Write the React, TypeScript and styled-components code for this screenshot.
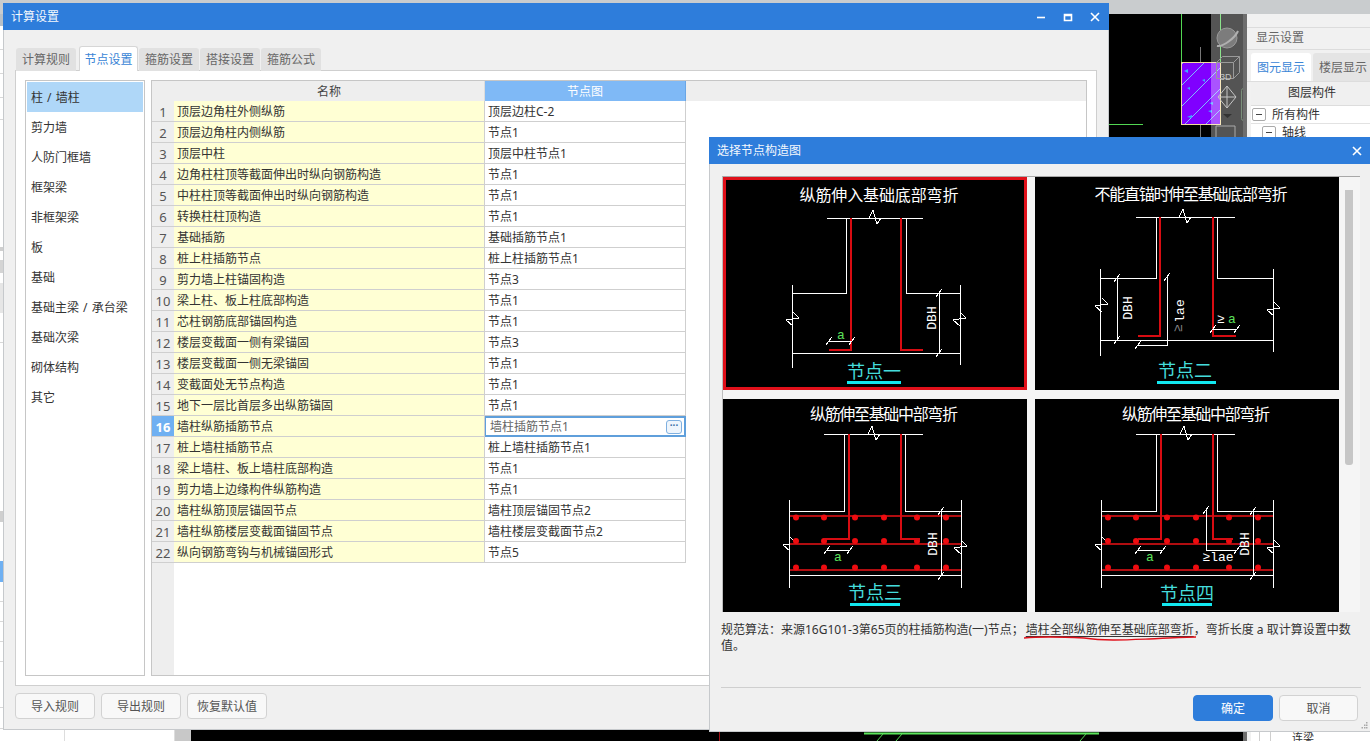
import React from "react";
import styled, { createGlobalStyle } from "styled-components";

const FONT = `"Noto Sans", "Noto Sans CJK SC", sans-serif`;

const Global = createGlobalStyle`
  html, body { margin: 0; padding: 0; background: #f3f3f3; overflow: hidden; }
  * { box-sizing: border-box; }
`;

const Desktop = styled.div`
  position: relative;
  width: 1370px;
  height: 741px;
  overflow: hidden;
  font: 12px/16px ${FONT};
  color: #333;
`;

/* ---------- application behind the dialogs ---------- */
const Backdrop = styled.div`
  width: 100%;
  height: 100%;
  display: flex;
  flex-direction: column;
`;
const TopStrip = styled.div`
  height: 14px;
  flex: none;
  background: #c9ccce;
`;
const BackRow = styled.div`
  flex: 1;
  min-height: 0;
  display: flex;
`;
const LeftRail = styled.div`
  width: 175px;
  flex: none;
  background: #fff;
  display: flex;
  flex-direction: column;
  border-right: 1px solid #ddd;
  position: relative;
`;
const RailRow = styled.div<{ $h: number; $tone?: string; $line?: boolean }>`
  height: ${(p) => p.$h}px;
  flex: none;
  background: ${(p) => p.$tone ?? "transparent"};
  border-bottom: ${(p) => (p.$line ? "1px solid #d8d8d8" : "none")};
`;
const RailFoot = styled.div`
  flex: 1;
  margin-left: 64px;
  border-left: 1px solid #ddd;
`;
const Gutter = styled.div`
  width: 16px;
  flex: none;
  background: #c8c8c8;
`;
const Cad = styled.svg`
  width: 1052px;
  flex: none;
  height: 727px;
  background: #000;
  display: block;
`;
const CadGap = styled.div`
  width: 4px;
  flex: none;
  background: #6e6e6e;
`;
const SidePanel = styled.div`
  flex: 1;
  background: #f1f1f1;
  display: flex;
  flex-direction: column;
  padding-top: 13px;
`;
const SideTitle = styled.div`
  height: 23px;
  line-height: 19px;
  padding-left: 9px;
  color: #666;
  font-size: 12px;
  border-top: 1px solid #dcdcdc;
  border-bottom: 1px solid #dcdcdc;
`;
const SideTabs = styled.div`
  display: flex;
  gap: 2px;
  padding: 3px 0 0 4px;
  height: 32px;
  border-bottom: 1px solid #ddd;
  white-space: nowrap;
`;
const SideTab = styled.div<{ $active?: boolean }>`
  width: 60px;
  flex: none;
  height: 28px;
  text-align: center;
  line-height: 29px;
  border-radius: 3px 3px 0 0;
  background: ${(p) => (p.$active ? "#fff" : "#e4e4e4")};
  color: ${(p) => (p.$active ? "#3a85d6" : "#666")};
`;
const SideHead = styled.div`
  height: 24px;
  line-height: 22px;
  text-align: center;
  margin-left: 4px;
  background: #f0f0f0;
  border-bottom: 1px solid #ddd;
`;
const TreeBody = styled.div`
  flex: 1;
  background: #fff;
  margin-left: 4px;
  position: relative;
`;
const TreeRow = styled.div<{ $indent: number }>`
  display: flex;
  align-items: center;
  gap: 6px;
  height: 18px;
  padding-left: ${(p) => p.$indent}px;
  border-bottom: 1px solid #e2e2e2;
`;
const TreeBox = styled.span`
  width: 14px;
  height: 13px;
  flex: none;
  border: 1px solid #aaa;
  border-radius: 2px;
  display: flex;
  align-items: center;
  justify-content: center;
  &::before {
    content: "";
    width: 6px;
    height: 1px;
    background: #444;
  }
`;
const TreeFoot = styled.div`
  position: absolute;
  left: 41px;
  top: 625px;
  line-height: 14px;
  font-size: 11px;
`;
const TreeGuides = styled.div`
  position: absolute;
  left: 8px;
  top: 624px;
  width: 12px;
  height: 14px;
  border-left: 1px solid #cfcfcf;
  border-right: 1px solid #cfcfcf;
`;

/* ---------- dialogs ---------- */
const Dialog = styled.section<{ $x: number; $y: number; $w: number; $h: number }>`
  position: absolute;
  left: ${(p) => p.$x}px;
  top: ${(p) => p.$y}px;
  width: ${(p) => p.$w}px;
  height: ${(p) => p.$h}px;
  background: #f0f0f0;
  border: 1px solid #c6c9cc;
  border-top: none;
  display: flex;
  flex-direction: column;
`;
const TitleBar = styled.header`
  height: 27px;
  flex: none;
  margin: 0 -1px;
  background: #2e7ddb;
  color: #f4f8fd;
  display: flex;
  align-items: center;
  padding: 0 9px 0 8px;
  font-size: 12px;
`;
const TitleText = styled.span`
  flex: 1;
`;
const WinButton = styled.svg`
  width: 10px;
  height: 10px;
  margin-left: 17px;
  flex: none;
  fill: none;
  stroke: #fff;
  stroke-width: 1.6;
`;

const MainBody = styled.div`
  flex: 1;
  min-height: 0;
  padding: 16px 11px 0 11px;
  display: flex;
  flex-direction: column;
`;
const Tabs = styled.div`
  display: flex;
  align-items: flex-end;
  height: 25px;
  flex: none;
  gap: 1px;
  padding-left: 1px;
  position: relative;
  z-index: 1;
  margin-bottom: -1px;
`;
const Tab = styled.div<{ $active?: boolean }>`
  width: ${(p) => (p.$active ? 59 : 60)}px;
  margin-left: ${(p) => (p.$active ? 2 : 0)}px;
  height: ${(p) => (p.$active ? 25 : 23)}px;
  text-align: center;
  line-height: ${(p) => (p.$active ? 26 : 24)}px;
  background: ${(p) => (p.$active ? "#fff" : "#e1e1e1")};
  color: ${(p) => (p.$active ? "#3a85d6" : "#666")};
  border: ${(p) => (p.$active ? "1px solid #d6d6d6" : "none")};
  border-bottom: none;
  border-radius: 3px 3px 0 0;
`;
const Pane = styled.div`
  height: 616px;
  flex: none;
  background: #fff;
  border: 1px solid #cfcfcf;
  padding: 9px;
  display: flex;
  gap: 6px;
`;
const CategoryList = styled.ul`
  width: 120px;
  flex: none;
  margin: 0;
  padding: 1px;
  list-style: none;
  border: 1px solid #c6c6c6;
`;
const Category = styled.li<{ $active?: boolean }>`
  height: 30px;
  line-height: 32px;
  padding-left: 4px;
  word-spacing: 1px;
  background: ${(p) => (p.$active ? "#afd7f8" : "transparent")};
`;
const Grid = styled.div`
  width: 936px;
  flex: none;
  border: 1px solid #c6c6c6;
  background: linear-gradient(to right, #eeeeee 22px, #fff 22px);
  display: flex;
  flex-direction: column;
`;
const HeadRow = styled.div`
  display: flex;
  height: 20px;
  flex: none;
  padding-left: 22px;
  background: #eeeeee;
`;
const HeadCell = styled.div<{ $w: number; $active?: boolean }>`
  width: ${(p) => p.$w}px;
  flex: none;
  text-align: center;
  line-height: 22px;
  color: ${(p) => (p.$active ? "#fff" : "#444")};
  background: ${(p) => (p.$active ? "#7fb9f6" : "transparent")};
  border-right: ${(p) => (p.$active ? "1px solid #69a6e6" : "1px solid #dcdcdc")};
`;
const Row = styled.div`
  display: flex;
  height: 21px;
  flex: none;
  line-height: 22px;
`;
const IndexCell = styled.div<{ $active?: boolean }>`
  width: 22px;
  flex: none;
  text-align: center;
  font-size: 13px;
  color: ${(p) => (p.$active ? "#fff" : "#555")};
  font-weight: ${(p) => (p.$active ? 700 : 400)};
  background: ${(p) => (p.$active ? "#6fb0f2" : "#eeeeee")};
  border-bottom: 1px solid #cfcfcf;
`;
const NameCell = styled.div`
  width: 311px;
  flex: none;
  padding-left: 3px;
  background: #ffffd4;
  border-bottom: 1px solid #cfcfcf;
  border-right: 1px solid #cfcfcf;
  white-space: nowrap;
`;
const ValueCell = styled.div`
  width: 201px;
  flex: none;
  padding-left: 3px;
  background: #fff;
  border-bottom: 1px solid #cfcfcf;
  border-right: 1px solid #cfcfcf;
  white-space: nowrap;
`;
const ActiveCell = styled.div`
  width: 201px;
  flex: none;
  padding: 0 2px 0 4px;
  background: #fff;
  border: 2px solid #5f9fdb;
  border-left-width: 1px;
  color: #666;
  display: flex;
  align-items: center;
  justify-content: space-between;
  line-height: 17px;
`;
const MoreButton = styled.span`
  width: 16px;
  height: 14px;
  flex: none;
  border: 1px solid #7fb0e0;
  border-radius: 3px;
  background: #eef5fc;
  color: #3a6ea5;
  font-size: 10px;
  line-height: 8px;
  text-align: center;
  font-weight: 700;
`;
const ButtonRow = styled.div`
  display: flex;
  gap: 6px;
  margin-top: 7px;
`;
const Btn = styled.button<{ $primary?: boolean; $w?: number }>`
  width: ${(p) => p.$w ?? 80}px;
  height: 26px;
  padding: 2px 0 0;
  border-radius: 4px;
  font: 12px/16px ${FONT};
  color: ${(p) => (p.$primary ? "#fff" : "#555")};
  background: ${(p) => (p.$primary ? "#2e7ddb" : "#f8f8f8")};
  border: 1px solid ${(p) => (p.$primary ? "#2e7ddb" : "#d2d2d2")};
`;

const PickBody = styled.div`
  flex: 1;
  min-height: 0;
  padding: 12px 10px 0 12px;
  display: flex;
  flex-direction: column;
`;
const Gallery = styled.div`
  height: 436px;
  flex: none;
  display: flex;
  background: #f5f5f5;
  border-top: 1px solid #a8a8a8;
  border-left: 1px solid #bdbdbd;
`;
const TileGrid = styled.div`
  display: grid;
  grid-template-columns: 304px 304px;
  grid-template-rows: 213px 213px;
  column-gap: 8px;
  row-gap: 9px;
  flex: none;
`;
const Tile = styled.svg<{ $selected?: boolean }>`
  display: block;
  width: 100%;
  height: 100%;
  background: #000;
  outline: ${(p) => (p.$selected ? "3px solid #e0101a" : "none")};
  outline-offset: -3px;
`;
const ScrollTrack = styled.div`
  flex: 1;
  padding: 13px 0 0 6px;
`;
const ScrollThumb = styled.div`
  width: 8px;
  height: 275px;
  background: #c6c6c6;
  border-radius: 0 0 3px 3px;
`;
const Note = styled.p`
  margin: 10px 0 0 -1px;
  height: 34px;
  width: 640px;
  line-height: 16px;
  color: #333;
`;
const Marked = styled.span`
  position: relative;
  margin-left: 2px;
  text-decoration: underline;
  text-underline-offset: 2px;
`;
const Scribble = styled.svg`
  position: absolute;
  left: -2px;
  bottom: -3px;
  width: 172px;
  height: 7px;
  fill: none;
  stroke: #e0101a;
  stroke-width: 1.4;
  overflow: visible;
`;
const Rule = styled.div`
  margin: 31px -1px 0 -1px;
  border-top: 1px solid #cfcfcf;
  flex: none;
`;
const PickFooter = styled.div`
  display: flex;
  justify-content: flex-end;
  gap: 6px;
  margin: 7px 2px 0 0;
`;
const Grip = styled.svg`
  position: absolute;
  right: 2px;
  bottom: 2px;
  width: 7px;
  height: 7px;
  fill: #a8a8a8;
`;

/* ---------- CAD drawing parts ---------- */
const Wh = styled.path`
  fill: none;
  stroke: #fff;
  stroke-width: 1;
  shape-rendering: crispEdges;
`;
const Rd = styled.path`
  fill: none;
  stroke: #d80c12;
  stroke-width: 2.5;
  shape-rendering: crispEdges;
`;
const Bar = styled.path`
  fill: none;
  stroke: #b00d10;
  stroke-width: 2;
  shape-rendering: crispEdges;
`;
const Dot = styled.circle`
  fill: #ee0c10;
`;
const Caption = styled.text`
  fill: #fff;
  font: 16px ${FONT};
  text-anchor: middle;
`;
const NodeName = styled.text`
  fill: #45dcdc;
  font: 18px ${FONT};
  text-anchor: middle;
`;
const NodeBar = styled.rect`
  fill: #12e8f0;
`;
const Mono = styled.text<{ $c?: string }>`
  fill: ${(p) => p.$c ?? "#fff"};
  font: 13px "Liberation Mono", monospace;
  text-anchor: middle;
`;

const zigTop = (x: number, y: number) =>
  `M${x - 6} ${y}L${x - 2} ${y - 8}L${x + 2} ${y + 6}L${x + 6} ${y}`;
const zigSide = (x: number, y: number) =>
  `M${x} ${y - 8}L${x + 6} ${y - 2}L${x - 7} ${y}L${x} ${y + 6}`;
const tick = (x: number, y: number) => `M${x - 3} ${y + 4}L${x + 3} ${y - 4}`;

const Label: React.FC<{ x: number; y: number; w: number; children: string }> = ({ x, y, w, children }) => (
  <Caption x={x} y={y} textLength={w} lengthAdjust="spacing">{children}</Caption>
);
const VText: React.FC<{ x: number; y: number; children: string; c?: string }> = ({ x, y, children, c }) => (
  <Mono x={x} y={y} $c={c} transform={`rotate(-90 ${x} ${y})`}>{children}</Mono>
);

const rebarRows = [517.5, 541, 567.5];

const Rebars: React.FC<{ from: number; to: number; xs: number[] }> = ({ from, to, xs }) => (
  <>
    <Bar d={`M${from} 516H${to}M${from} 544H${to}M${from} 570H${to}`} />
    {rebarRows.map((y) => xs.map((x) => <Dot key={`${x}-${y}`} cx={x} cy={y} r={3} />))}
  </>
);

const TileOne = () => (
  <Tile $selected viewBox="723 177 304 213">
    <Label x={879} y={201} w={159}>纵筋伸入基础底部弯折</Label>
    <Wh d={`M827 218.5H923M846.5 218.5V293.5H792.5M792.5 285V368M906.5 218.5V293.5H960.5M960.5 285V365M792.5 353.5H960.5`} />
    <Wh d={zigTop(875, 218) + zigSide(793, 320) + zigSide(960, 320)} />
    <Rd d="M851 218V350H829M901 218V350H923" />
    <Wh d={`M939.5 293V353${tick(939, 293)}${tick(939, 353)}M829 341.5H852${tick(829, 341)}${tick(852, 341)}`} />
    <VText x={936} y={318}>DBH</VText>
    <Mono x={841} y={339} $c="#5ce05c">a</Mono>
    <NodeName x={874} y={378}>节点一</NodeName>
    <NodeBar x={847} y={381} width={54} height={3} />
  </Tile>
);

const TileTwo = () => (
  <Tile viewBox="1035 177 304 213">
    <Label x={1191} y={200} w={193}>不能直锚时伸至基础底部弯折</Label>
    <Wh d="M1136 217.5H1235M1156.5 217.5V278.5H1100.5M1100.5 269V356M1217.5 217.5V278.5H1273.5M1273.5 269V352M1100.5 340.5H1273.5" />
    <Wh d={zigTop(1185, 217) + zigSide(1102, 306) + zigSide(1274, 310)} />
    <Rd d="M1160 217V336H1138M1213 217V336H1236" />
    <Wh d={`M1117.5 278V340${tick(1117, 278)}${tick(1117, 340)}M1167.5 277V345.5H1138${tick(1167, 277)}${tick(1138, 345)}M1213 329.5H1237${tick(1213, 329)}${tick(1237, 329)}`} />
    <VText x={1132} y={308}>DBH</VText>
    <VText x={1184} y={311}>lae</VText>
    <VText x={1182} y={328} c="#888">≥</VText>
    <Mono x={1221} y={323}>≥</Mono>
    <Mono x={1232} y={323} $c="#5ce05c">a</Mono>
    <NodeName x={1185} y={377}>节点二</NodeName>
    <NodeBar x={1157} y={381} width={59} height={3} />
  </Tile>
);

const TileThree = () => (
  <Tile viewBox="723 399 304 213">
    <Label x={884} y={420} w={148}>纵筋伸至基础中部弯折</Label>
    <Wh d="M824 434.5H923M844.5 434.5V511.5H789.5M789.5 500V588M905.5 434.5V511.5H961.5M961.5 500V588M789.5 575.5H961.5" />
    <Wh d={zigTop(874, 434) + zigSide(790, 545) + zigSide(961, 548)} />
    <Rebars from={790} to={961} xs={[796, 824, 855, 884, 917, 946]} />
    <Rd d="M849 434V539H824M901 434V539H920" />
    <Wh d={`M941 511V576${tick(941, 511)}${tick(941, 576)}M827 550.5H850${tick(827, 550)}${tick(850, 550)}`} />
    <VText x={937} y={544}>DBH</VText>
    <Mono x={838} y={561} $c="#5ce05c">a</Mono>
    <NodeName x={875} y={599}>节点三</NodeName>
    <NodeBar x={850} y={603} width={50} height={3} />
  </Tile>
);

const TileFour = () => (
  <Tile viewBox="1035 399 304 213">
    <Label x={1196} y={420} w={148}>纵筋伸至基础中部弯折</Label>
    <Wh d="M1136 434.5H1235M1156.5 434.5V511.5H1101.5M1101.5 500V588M1217.5 434.5V511.5H1273.5M1273.5 500V588M1101.5 575.5H1273.5" />
    <Wh d={zigTop(1186, 434) + zigSide(1102, 545) + zigSide(1274, 548)} />
    <Rebars from={1102} to={1273} xs={[1108, 1136, 1167, 1196, 1229, 1258]} />
    <Rd d="M1161 434V539H1138M1213 434V539H1233" />
    <Wh d={`M1253 511V576${tick(1253, 511)}${tick(1253, 576)}M1138 550.5H1163${tick(1138, 550)}${tick(1163, 550)}M1206.5 510V550.5H1237${tick(1206, 510)}${tick(1237, 550)}`} />
    <VText x={1249} y={544}>DBH</VText>
    <Mono x={1218} y={561}>≥lae</Mono>
    <Mono x={1150} y={561} $c="#5ce05c">a</Mono>
    <NodeName x={1187} y={600}>节点四</NodeName>
    <NodeBar x={1162} y={603} width={50} height={3} />
  </Tile>
);

/* ---------- data ---------- */
const tabs = ["计算规则", "节点设置", "箍筋设置", "搭接设置", "箍筋公式"];
const categories = ["柱 / 墙柱", "剪力墙", "人防门框墙", "框架梁", "非框架梁", "板", "基础", "基础主梁 / 承台梁", "基础次梁", "砌体结构", "其它"];
const rows: [string, string][] = [
  ["顶层边角柱外侧纵筋", "顶层边柱C-2"],
  ["顶层边角柱内侧纵筋", "节点1"],
  ["顶层中柱", "顶层中柱节点1"],
  ["边角柱柱顶等截面伸出时纵向钢筋构造", "节点1"],
  ["中柱柱顶等截面伸出时纵向钢筋构造", "节点1"],
  ["转换柱柱顶构造", "节点1"],
  ["基础插筋", "基础插筋节点1"],
  ["桩上柱插筋节点", "桩上柱插筋节点1"],
  ["剪力墙上柱锚固构造", "节点3"],
  ["梁上柱、板上柱底部构造", "节点1"],
  ["芯柱钢筋底部锚固构造", "节点1"],
  ["楼层变截面一侧有梁锚固", "节点3"],
  ["楼层变截面一侧无梁锚固", "节点1"],
  ["变截面处无节点构造", "节点1"],
  ["地下一层比首层多出纵筋锚固", "节点1"],
  ["墙柱纵筋插筋节点", "墙柱插筋节点1"],
  ["桩上墙柱插筋节点", "桩上墙柱插筋节点1"],
  ["梁上墙柱、板上墙柱底部构造", "节点1"],
  ["剪力墙上边缘构件纵筋构造", "节点1"],
  ["墙柱纵筋顶层锚固节点", "墙柱顶层锚固节点2"],
  ["墙柱纵筋楼层变截面锚固节点", "墙柱楼层变截面节点2"],
  ["纵向钢筋弯钩与机械锚固形式", "节点5"],
];
const railRows: { h: number; tone?: string; line?: boolean }[] = [
  { h: 12, tone: "#b8c0c8" },
  { h: 24, line: true },
  { h: 24, line: true },
  { h: 24, line: true },
  { h: 22, line: true },
  { h: 127 },
  { h: 4, tone: "#cfcfcf" },
  { h: 9 },
  { h: 13, tone: "#d4d4d4" },
  { h: 10 },
  { h: 30, tone: "#e6e6e6" },
  { h: 30, line: true },
  { h: 168 },
  { h: 11, tone: "#cfcfcf" },
  { h: 39 },
  { h: 21, tone: "#6fb0f2" },
  { h: 20, line: true },
  { h: 20, line: true },
  { h: 20, line: true },
  { h: 20, line: true },
  { h: 46, line: true },
  { h: 21, line: true },
];

const hatch = [0, 1, 2, 3, 4, 5];

export default function App() {
  return (
    <Desktop>
      <Global />
      <Backdrop>
        <TopStrip />
        <BackRow>
          <LeftRail>
            {railRows.map((r, i) => (
              <RailRow key={i} $h={r.h} $tone={r.tone} $line={r.line} />
            ))}
            <RailFoot />
          </LeftRail>
          <Gutter />
          <Cad viewBox="191 14 1052 727">
            <defs>
              <clipPath id="hatchClip"><rect x={1182} y={63} width={38} height={61} /></clipPath>
            </defs>
            <path d="M1109 124.5H1143M1181.5 14V124M1220.5 14V124" stroke="#52d652" fill="none" shapeRendering="crispEdges" />
            <path d="M1200.5 47V137" stroke="#777" fill="none" shapeRendering="crispEdges" />
            <rect x={1181.5} y={62.5} width={39} height={62} fill="#8000ff" stroke="#f3dc9c" />
            <g clipPath="url(#hatchClip)">
              {hatch.map((i) => (
                <path key={i} d={`M${1122 + i * 21} 124L${1184 + i * 21} 62`} stroke="#7fb8ff" fill="none" />
              ))}
            </g>
            <path d="M1184 71l4-2v4zM1187 88l3-1v3zM1202 80l3-1v3zM1209 103l4-1v3zM1187 117l5-2v3zM1208 111l4-1v3z" fill="#3fa8ff" />
            <rect x={1211} y={14} width={32} height={123} fill="#fff" fillOpacity={0.33} />
            <g fill="none" stroke="#9a9a9a">
              <ellipse cx={1227} cy={38} rx={10} ry={10} fill="#7c7c7c" />
              <path d="M1217 46c6 1 18-8 21-15" strokeWidth={2} stroke="#b0b0b0" />
              <path d="M1216.500 62.500h17v16h-17zM1216.500 62.500l6-6h17v16l-6 6M1233.500 62.500l6-6" />
              <path d="M1227 86l9 11-9 11-9-11zM1227 86v11M1218 97h18M1227 97v11" stroke="#c4c4c4" />
              <path d="M1216 137v-11h19v11" stroke="#aaa" />
              <rect x={1241.500} y={88.500} width={4} height={32} rx={2} stroke="#7a8f7a" />
            </g>
            <text x={1220} y={80} fill="#c4c4c4" fontSize={9} fontFamily={`"Liberation Sans", sans-serif`}>3D</text>
            <path d="M1223 114h9l-4.500 4z" fill="#333" />
            <path d="M864 733.500H1099" stroke="#5ce65c" strokeWidth={2} fill="none" />
            <path d="M883 734l-6 7M902 734l-6 7M1086 734l-6 7" stroke="#52d652" fill="none" />
            <path d="M719.500 730V741" stroke="#a01018" fill="none" />
          </Cad>
          <CadGap />
          <SidePanel>
            <SideTitle>显示设置</SideTitle>
            <SideTabs>
              <SideTab $active>图元显示</SideTab>
              <SideTab>楼层显示</SideTab>
            </SideTabs>
            <SideHead>图层构件</SideHead>
            <TreeBody>
              <TreeRow $indent={1}><TreeBox />所有构件</TreeRow>
              <TreeRow $indent={11}><TreeBox />轴线</TreeRow>
              <TreeGuides />
              <TreeFoot>连梁</TreeFoot>
            </TreeBody>
          </SidePanel>
        </BackRow>
      </Backdrop>

      <Dialog $x={3} $y={3} $w={1106} $h={727}>
        <TitleBar>
          <TitleText>计算设置</TitleText>
          <WinButton viewBox="0 0 10 10"><path d="M1 5.500H9" /></WinButton>
          <WinButton viewBox="0 0 10 10"><path d="M1.500 2.500H8.500V8.500H1.500ZM1.500 3.500H8.500" /></WinButton>
          <WinButton viewBox="0 0 10 10"><path d="M1 1L9 9M9 1L1 9" /></WinButton>
        </TitleBar>
        <MainBody>
          <Tabs>
            {tabs.map((t, i) => (
              <Tab key={t} $active={i === 1}>{t}</Tab>
            ))}
          </Tabs>
          <Pane>
            <CategoryList>
              {categories.map((c, i) => (
                <Category key={c} $active={i === 0}>{c}</Category>
              ))}
            </CategoryList>
            <Grid>
              <HeadRow>
                <HeadCell $w={311}>名称</HeadCell>
                <HeadCell $w={201} $active>节点图</HeadCell>
              </HeadRow>
              {rows.map(([name, value], i) => (
                <Row key={name}>
                  <IndexCell $active={i === 15}>{i + 1}</IndexCell>
                  <NameCell>{name}</NameCell>
                  {i === 15 ? (
                    <ActiveCell>{value}<MoreButton>···</MoreButton></ActiveCell>
                  ) : (
                    <ValueCell>{value}</ValueCell>
                  )}
                </Row>
              ))}
            </Grid>
          </Pane>
          <ButtonRow>
            <Btn>导入规则</Btn>
            <Btn>导出规则</Btn>
            <Btn>恢复默认值</Btn>
          </ButtonRow>
        </MainBody>
      </Dialog>

      <Dialog $x={709} $y={137} $w={662} $h={595}>
        <TitleBar>
          <TitleText>选择节点构造图</TitleText>
          <WinButton viewBox="0 0 10 10"><path d="M1 1L9 9M9 1L1 9" /></WinButton>
        </TitleBar>
        <PickBody>
          <Gallery>
            <TileGrid>
              <TileOne />
              <TileTwo />
              <TileThree />
              <TileFour />
            </TileGrid>
            <ScrollTrack><ScrollThumb /></ScrollTrack>
          </Gallery>
          <Note>
            规范算法：来源16G101-3第65页的柱插筋构造(一)节点；
            <Marked>
              墙柱全部纵筋伸至基础底部弯折
              <Scribble viewBox="0 0 172 7">
                <path d="M0 4C20 2 40 3 60 4C80 7 100 6 125 5C145 4 160 3 172 3" />
              </Scribble>
            </Marked>
            ，弯折长度 a 取计算设置中数值。
          </Note>
          <Rule />
          <PickFooter>
            <Btn $primary>确定</Btn>
            <Btn $w={79}>取消</Btn>
          </PickFooter>
        </PickBody>
        <Grip viewBox="0 0 7 7">
          <rect x={5} y={0} width={1.500} height={1.500} />
          <rect x={3} y={2.500} width={1.500} height={1.500} />
          <rect x={5} y={2.500} width={1.500} height={1.500} />
          <rect x={0.500} y={5} width={1.500} height={1.500} />
          <rect x={3} y={5} width={1.500} height={1.500} />
          <rect x={5} y={5} width={1.500} height={1.500} />
        </Grip>
      </Dialog>
    </Desktop>
  );
}
